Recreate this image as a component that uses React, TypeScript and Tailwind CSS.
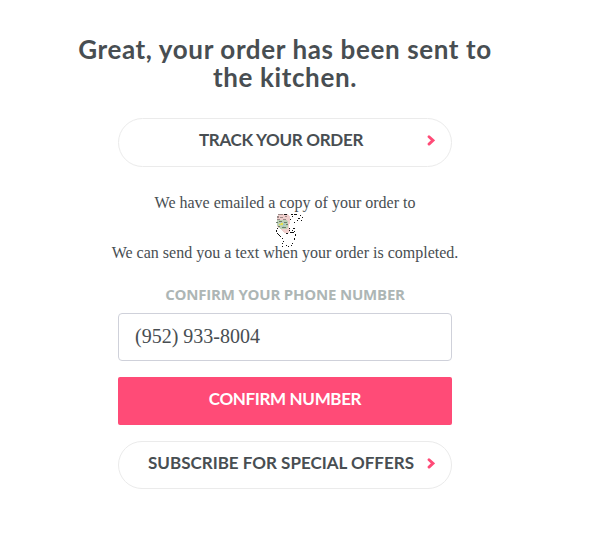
type PillButtonProps = {
  label: string;
  className: string;
};

function Chevron() {
  return (
    <svg
      className="absolute top-[16px] right-[16px] h-[11px] w-[8px]"
      viewBox="0 0 8 11"
      fill="none"
      stroke="#ff4b77"
      strokeWidth="2.8"
    >
      <path d="M2 1.7 6 5.4 2 9.1" strokeLinecap="round" strokeLinejoin="miter" />
    </svg>
  );
}

function PillButton({ label, className }: PillButtonProps) {
  return (
    <button
      type="button"
      className={`relative flex w-full justify-center rounded-full border border-[#ebebeb] bg-white pt-[11px] pr-[8px] font-['Lato',sans-serif] text-[17px] leading-[20px] font-bold whitespace-nowrap text-[#484e52] ${className}`}
    >
      {label}
      <Chevron />
    </button>
  );
}

function CustomerMark() {
  return (
    <svg className="block h-[38px] w-[30px]" viewBox="0 0 30 38" fill="none" shapeRendering="crispEdges">
      <path d="M5 3h9l2 3v5l-1 4 1 5-2 2h-4l-3-4-4-2V6z" fill="#f0cfcd" />
      <path d="M4 3h5v1H4zM3 5h2v2H3zM6 6h3v1H6zM3 8h3v1H3zM11 5h2v1h-2zM9 8h3v1H9z" fill="#9b8a88" />
      <path d="M3 9h9l2 2v5l-2 2H6l-3-3z" fill="#bccfb6" />
      <path d="M2 11h2v1H2zM5 10h3v1H5zM10 11h3v1h-3zM4 15h2v1H4zM8 16h4v1H8zM12 13h2v1h-2z" fill="#6c7c68" />
      <path d="M5 13h4v1H5zM7 12h2v1H7z" fill="#e6e14a" />
      <path d="M9 13h2v1H9zM9 15h1v1H9z" fill="#91c8cc" />
      <path
        d="M10 3.5h3M17 3.5h2M20 3.5h3M26 4.5h1M28 6.5h1M27 9.5h1M24 7.5h2M23 9.5h1M18 5.5h1M16 8.5h1M20 11.5h1M19 17.5h2M15 19.5h1M18 19.5h1M16 21.5h4M12 22.5h2M3 17.5h1M2 19.5h1M2 20.5h1M3 22.5h1M4 23.5h1M5 24.5h1M6 25.5h1M8 27.5h1M9 30.5h1M8 32.5h1M12 34.5h1M14 35.5h1M17 34.5h1M18 32.5h1"
        stroke="#111"
      />
      <path d="M20 20h1v1h-1zM21 23h1v2h-1zM20 27h1v2h-1zM15 17h1v1h-1zM8 35h1v1H8z" fill="#111" />
    </svg>
  );
}

export default function App() {
  return (
    <main className="flex h-[544px] w-[599px] flex-col bg-white pl-[71px] text-[#484e52]">
      <section className="flex w-[428px] flex-col items-center">
        <h1 className="mt-[35px] text-center font-['Lato',sans-serif] text-[26px] leading-[28px] font-bold tracking-[0.62px]">
          Great, your order has been sent to the kitchen.
        </h1>

        <div className="mt-[27px] w-[334px]">
          <PillButton label="TRACK YOUR ORDER" className="h-[49px] tracking-[-0.3px]" />
        </div>

        <div className="mt-[24px] flex flex-col items-center font-['Liberation_Serif',serif] text-[16px] leading-[24px] whitespace-nowrap">
          <p>We have emailed a copy of your order to</p>
          <div className="-mt-[4px] -mb-[8px] ml-[8px]">
            <CustomerMark />
          </div>
          <p>We can send you a text when your order is completed.</p>
        </div>

        <form className="mt-[17px] flex w-[334px] flex-col" onSubmit={(event) => event.preventDefault()}>
          <label
            htmlFor="phone"
            className="text-center font-['Open_Sans',sans-serif] text-[15px] leading-[24px] font-bold tracking-[-0.2px] whitespace-nowrap text-[#adb6b5]"
          >
            CONFIRM YOUR PHONE NUMBER
          </label>
          <input
            id="phone"
            type="tel"
            defaultValue="(952) 933-8004"
            className="mt-[7px] h-[48px] w-full rounded-[4px] border border-[#cfd1da] px-[16px] pb-[2px] font-['Liberation_Serif',serif] text-[20px] outline-none"
          />
          <button
            type="submit"
            className="mt-[16px] flex h-[48px] justify-center rounded-[2px] bg-[#ff4b77] pt-[12px] font-['Lato',sans-serif] text-[17px] leading-[20px] font-bold tracking-[-0.35px] text-white"
          >
            CONFIRM NUMBER
          </button>
        </form>

        <div className="mt-[16px] w-[334px]">
          <PillButton label="SUBSCRIBE FOR SPECIAL OFFERS" className="h-[48px]" />
        </div>
      </section>
    </main>
  );
}
